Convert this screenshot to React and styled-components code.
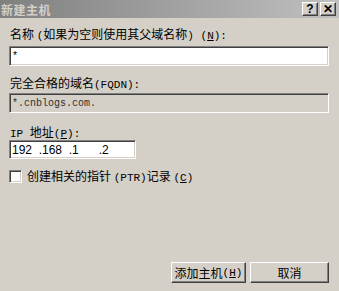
import React from 'react';
import styled, { createGlobalStyle } from 'styled-components';

const GlobalStyle = createGlobalStyle`
  html, body {
    margin: 0;
    padding: 0;
    background: #d4d0c8;
  }
`;

const FONT = `"SimSun", "Noto Sans CJK SC", "DejaVu Sans", sans-serif`;
const MONO = `"Liberation Mono", "Noto Sans CJK SC", monospace`;

const Window = styled.div`
  width: 339px;
  height: 291px;
  background: #d4d0c8;
  display: flex;
  flex-direction: column;
  font-family: ${FONT};
  font-size: 12px;
  color: #000;
  overflow: hidden;
`;

const TitleBar = styled.div`
  height: 18px;
  background: linear-gradient(to right, #808080, #c0c0c0);
  display: flex;
  align-items: center;
  padding: 0 3px 0 1px;
`;

const Title = styled.span`
  flex: 1;
  color: #d4d0c8;
  font-weight: bold;
  font-size: 12px;
  letter-spacing: 0.5px;
`;

const CapButton = styled.div`
  width: 16px;
  height: 14px;
  box-sizing: border-box;
  background: #d4d0c8;
  border-top: 1px solid #fff;
  border-left: 1px solid #fff;
  border-right: 1px solid #404040;
  border-bottom: 1px solid #404040;
  box-shadow: inset -1px -1px 0 #808080;
  display: flex;
  align-items: center;
  justify-content: center;
  margin-left: ${({ $gap }) => $gap || 0}px;
  font-family: "Liberation Sans", sans-serif;
  font-weight: bold;
  font-size: 12px;
  line-height: 1;
`;

const Body = styled.div`
  flex: 1;
  display: flex;
  flex-direction: column;
  padding: 9px 10px 8px 9px;
`;

const Label = styled.div`
  line-height: 13px;
  height: 13px;
  margin-top: ${({ $top }) => $top}px;
  padding-left: 1px;
  white-space: nowrap;
`;

const Mono = styled.span`
  font-family: ${MONO};
  font-size: 11px;
`;

const Field = styled.div`
  box-sizing: border-box;
  width: ${({ $w }) => $w}px;
  height: ${({ $h }) => $h || 20}px;
  margin-top: ${({ $top }) => $top}px;
  background: ${({ $disabled }) => ($disabled ? '#d4d0c8' : '#fff')};
  border-top: 1px solid #808080;
  border-left: 1px solid #808080;
  border-right: 1px solid #fff;
  border-bottom: 1px solid #fff;
  box-shadow: inset 1px 1px 0 #404040, inset -1px -1px 0 #d4d0c8;
  display: flex;
  align-items: center;
  padding-left: 2px;
  font-family: ${({ $mono }) => ($mono ? MONO : FONT)};
  font-size: 10px;
  color: ${({ $disabled }) => ($disabled ? '#303030' : '#000')};
  white-space: pre;
`;

const IpText = styled.span`
  font-family: "Liberation Sans", sans-serif;
  font-size: 12px;
  white-space: pre;
`;

const CheckRow = styled.div`
  display: flex;
  align-items: center;
  margin-top: 11px;
  gap: 5px;
  line-height: 13px;
  height: 13px;
`;

const Box = styled.div`
  width: 13px;
  height: 13px;
  box-sizing: border-box;
  background: #fff;
  border-top: 1px solid #808080;
  border-left: 1px solid #808080;
  border-right: 1px solid #fff;
  border-bottom: 1px solid #fff;
  box-shadow: inset 1px 1px 0 #404040, inset -1px -1px 0 #d4d0c8;
`;

const Footer = styled.div`
  margin-top: auto;
  display: flex;
  justify-content: flex-end;
  gap: 4px;
`;

const Button = styled.div`
  box-sizing: border-box;
  width: ${({ $w }) => $w}px;
  height: 21px;
  background: #d4d0c8;
  border-top: 1px solid #fff;
  border-left: 1px solid #fff;
  border-right: 1px solid #404040;
  border-bottom: 1px solid #404040;
  box-shadow: inset -1px -1px 0 #808080;
  display: flex;
  align-items: center;
  justify-content: center;
  font-size: 12px;
`;

const U = styled.span`
  text-decoration: underline;
`;

export default function App() {
  return (
    <>
      <GlobalStyle />
      <Window>
        <TitleBar>
          <Title>新建主机</Title>
          <CapButton>?</CapButton>
          <CapButton $gap={2}>✕</CapButton>
        </TitleBar>
        <Body>
          <Label $top={0}>名称 <Mono>(</Mono>如果为空则使用其父域名称<Mono>) (<U>N</U>):</Mono></Label>
          <Field $w={320} $top={6} $mono>*</Field>
          <Label $top={10}>完全合格的域名<Mono>(FQDN):</Mono></Label>
          <Field $w={320} $top={4} $mono $disabled>*.cnblogs.com.</Field>
          <Label $top={12}><Mono>IP </Mono>地址<Mono>(<U>P</U>):</Mono></Label>
          <Field $w={127} $h={19} $top={2}><IpText>192  .168  .1      .2</IpText></Field>
          <CheckRow>
            <Box />
            <span>创建相关的指针 <Mono>(PTR)</Mono>记录 <Mono>(<U>C</U>)</Mono></span>
          </CheckRow>
          <Footer>
            <Button $w={75}>添加主机 <Mono>(<U>H</U>)</Mono></Button>
            <Button $w={79}>取消</Button>
          </Footer>
        </Body>
      </Window>
    </>
  );
}
